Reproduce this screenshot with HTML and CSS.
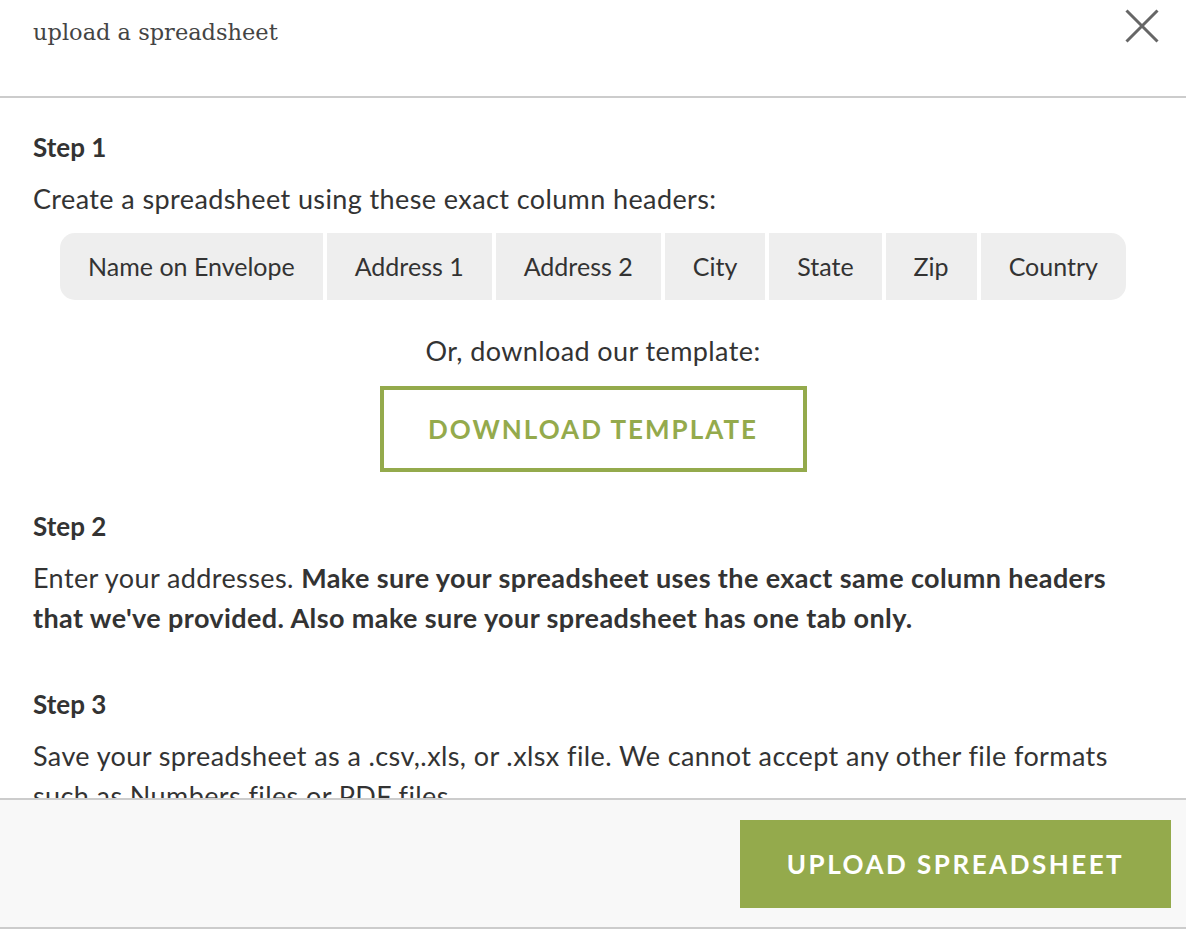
FILE: index.html
```html
<!DOCTYPE html>
<html lang="en">
<head>
  <meta charset="UTF-8" />
  <meta name="viewport" content="width=device-width, initial-scale=1" />
  <title>Upload a spreadsheet</title>
  <link rel="stylesheet" href="styles.css">
</head>
<body>

<div class="modal">
  <header class="modal-header">
    <h1>upload a spreadsheet</h1>
    <button type="button" class="close" aria-label="Close">
      <svg width="34" height="34" viewBox="0 0 34 34">
        <path d="M1.5 1.5 L32.5 32.5 M32.5 1.5 L1.5 32.5" stroke="#666" stroke-width="3" fill="none" />
      </svg>
    </button>
  </header>

  <div class="modal-body">
    <section class="step first">
      <h2>Step 1</h2>
      <p>Create a spreadsheet using these exact column headers:</p>
      <ul class="headers">
        <li>Name on Envelope</li>
        <li>Address 1</li>
        <li>Address 2</li>
        <li>City</li>
        <li>State</li>
        <li>Zip</li>
        <li>Country</li>
      </ul>
      <p class="center">Or, download our template:</p>
      <div class="center">
        <button type="button" class="btn-outline">Download template</button>
      </div>
    </section>

    <section class="step">
      <h2>Step 2</h2>
      <p>Enter your addresses. <strong>Make sure your spreadsheet uses the exact same column headers that we've provided. Also make sure your spreadsheet has one tab only.</strong></p>
    </section>

    <section class="step">
      <h2>Step 3</h2>
      <p>Save your spreadsheet as a .csv,.xls, or .xlsx file. We cannot accept any other file formats such as Numbers files or PDF files.</p>
    </section>
  </div>

  <footer class="modal-footer">
    <button type="button" class="btn-solid">Upload spreadsheet</button>
  </footer>
</div>

</body>
</html>
```

FILE: styles.css
```css
body {
  margin: 0;
  font-family: Lato, 'Noto Sans', sans-serif;
  color: #333;
  background: #fff;
}
.modal {
  height: 930px;
  display: flex;
  flex-direction: column;
}
.modal-header {
  height: 96px;
  border-bottom: 2px solid #ccc;
  display: flex;
  justify-content: space-between;
  align-items: flex-start;
  padding: 0 27px 0 33px;
  flex: 0 0 auto;
}
.modal-header h1 {
  margin: 19px 0 0;
  font-family: 'DejaVu Serif', serif;
  font-weight: normal;
  font-size: 22.5px;
  color: #444;
}
.close {
  background: none;
  border: none;
  padding: 0;
  margin-top: 9px;
  cursor: pointer;
}
.modal-body {
  flex: 1 1 auto;
  overflow: hidden;
  padding: 29px 33px 0;
}
.step {
  margin-bottom: 46px;
}
.step.first {
  margin-bottom: 34px;
}
.step h2 {
  margin: 0;
  font-size: 26px;
  line-height: 40px;
  font-weight: bold;
}
.step p {
  margin: 12px 0 0;
  font-size: 27px;
  letter-spacing: 0.4px;
  line-height: 40px;
}
.center {
  text-align: center;
}
.step p.center {
  margin-top: 31px;
}
.headers {
  list-style: none;
  margin: 14px 0 0;
  padding: 0;
  display: flex;
  justify-content: center;
  gap: 4px;
}
.headers li {
  background: #eee;
  font-size: 25px;
  line-height: 67px;
  padding: 0 28px;
}
.headers li:first-child {
  border-radius: 15px 0 0 15px;
}
.headers li:last-child {
  border-radius: 0 15px 15px 0;
}
.btn-outline {
  margin-top: 15px;
  width: 427px;
  height: 86px;
  background: #fff;
  border: 4px solid #94aa4c;
  color: #94aa4c;
  font-family: Lato, sans-serif;
  font-weight: bold;
  font-size: 26px;
  letter-spacing: 2px;
  text-transform: uppercase;
  cursor: pointer;
}
.modal-footer {
  flex: 0 0 auto;
  background: #f8f8f8;
  border-top: 2px solid #ccc;
  border-bottom: 2px solid #ccc;
  margin-bottom: 1px;
  padding: 20px 15px 19px;
  display: flex;
  justify-content: flex-end;
}
.btn-solid {
  width: 431px;
  height: 88px;
  background: #94aa4c;
  border: none;
  color: #fff;
  font-family: Lato, sans-serif;
  font-weight: bold;
  font-size: 26px;
  letter-spacing: 2.5px;
  text-transform: uppercase;
  cursor: pointer;
}
```
